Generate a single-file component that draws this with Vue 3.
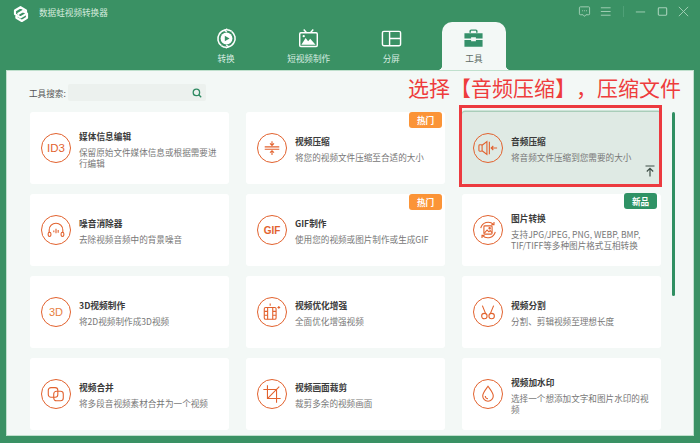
<template>
  <div class="app">
    <header class="header">
      <div class="title-row">
        <svg class="logo" viewBox="0 0 18 18" fill="none" stroke="#fff" stroke-width="2.2" stroke-linejoin="round">
          <path d="M3 5.5 8.5 2.2 14 5.5v3.6L8.5 12.4 3 9.1z" />
          <path d="M5.6 9.2 11 6l4 2.600v4.200L9.800 16 4.400 12.800v-2" />
        </svg>
        <span class="app-name">数据蛙视频转换器</span>
        <div class="win-btns">
          <svg class="win-icon" viewBox="0 0 14 14" fill="none" stroke="#a5d0b8" stroke-width="1">
            <path d="M2.500 2h9a1 1 0 0 1 1 1v6.500a1 1 0 0 1-1 1H8.500L7 12.300 5.500 10.500h-3a1 1 0 0 1-1-1V3a1 1 0 0 1 1-1z" />
            <path d="M4.500 6.200h1M6.600 6.200h1M8.700 6.200h1" />
          </svg>
          <svg class="win-icon menu" viewBox="0 0 14 14" fill="none" stroke="#a5d0b8" stroke-width="1">
            <path d="M2 3h10.500M2 7h10.500M2 11h10.500" />
          </svg>
          <span class="win-sep"></span>
          <svg class="win-icon min" viewBox="0 0 14 14" fill="none" stroke="#a5d0b8" stroke-width="1">
            <path d="M2 7.500h10" />
          </svg>
          <svg class="win-icon max" viewBox="0 0 14 14" fill="none" stroke="#a5d0b8" stroke-width="1.200">
            <rect x="2.500" y="3" width="9" height="8" rx="1" />
          </svg>
          <svg class="win-icon close" viewBox="0 0 14 14" fill="none" stroke="#a5d0b8" stroke-width="1">
            <path d="M2 2l10 10M12 2 2 12" />
          </svg>
        </div>
      </div>
      <nav class="tabs">
        <div v-for="tab in tabs" :key="tab.name" class="tab" :class="{ active: tab.active }">
          <svg v-if="tab.icon === 'convert'" class="tab-icon" viewBox="0 0 22 22" fill="none" stroke="#fff" stroke-width="1.600">
            <path d="M16.500 3.600A9 9 0 0 0 3.200 6.600 9 9 0 0 0 5.500 18.300" />
            <path d="M5.500 18.400A9 9 0 0 0 18.800 15.400 9 9 0 0 0 16.500 3.700" />
            <path d="M11.800 .8 8.800 2.600l2.600 1.600M10.200 21.200l3-1.800-2.600-1.600" stroke-width="1.200" />
            <circle cx="11" cy="11" r="6.200" fill="#fff" stroke="none" />
            <path d="M9.200 8v6l5-3z" fill="#3a9164" stroke="none" />
          </svg>
          <svg v-else-if="tab.icon === 'tv'" class="tab-icon" viewBox="0 0 22 22" fill="none" stroke="#fff" stroke-width="1.500">
            <rect x="1.800" y="5" width="18.400" height="14.400" rx="1.200" />
            <path d="M6 1.600 9 5M16 1.600 13 5" />
            <path d="M3.500 17.600 8 10.500l2.600 3.400 2.200-2.600 5.600 6.300z" fill="#fff" stroke="none" />
            <circle cx="6" cy="8.600" r="1.200" fill="#fff" stroke="none" />
          </svg>
          <svg v-else-if="tab.icon === 'split'" class="tab-icon" viewBox="0 0 22 22" fill="none" stroke="#fff" stroke-width="1.500">
            <rect x="1.500" y="3.500" width="19" height="15" rx="1.500" />
            <path d="M9 3.500v15M9 11h11.500" />
          </svg>
          <svg v-else class="tab-icon" viewBox="0 0 22 22">
            <path d="M7.500 5V3.200a1 1 0 0 1 1-1h5a1 1 0 0 1 1 1V5" fill="none" stroke="#35906a" stroke-width="1.500" />
            <path d="M1.500 5.500h19V11h-7V9.600h-5V11h-7z" fill="#35906a" />
            <path d="M1.500 12.600h7V14h5v-1.400h7v7h-19z" fill="#35906a" />
          </svg>
          <span class="tab-label">{{ tab.name }}</span>
        </div>
      </nav>
    </header>

    <main class="panel">
      <div class="search-row">
        <span class="search-label">工具搜索:</span>
        <div class="search-box">
          <svg class="search-icon" viewBox="0 0 10 10" fill="none" stroke="#2f8a62" stroke-width="1.300">
            <circle cx="4.400" cy="4.400" r="3.200" />
            <path d="M6.800 6.800 9.200 9.200" />
          </svg>
        </div>
      </div>
      <div class="body">
        <div class="grid">
          <div v-for="tool in tools" :key="tool.title" class="card" :class="{ selected: tool.selected }">
            <div class="icon">
              <span v-if="tool.mark" class="mark" :class="tool.icon">{{ tool.mark }}</span>
              <svg v-else-if="tool.icon === 'noise'" viewBox="0 0 22 22">
                <path d="M3.500 14v-3a7.500 7.500 0 0 1 15 0v3M11 9.500v5M8.600 11.500v2M13.400 11v3" />
                <rect x="2.400" y="13.500" width="3" height="4.600" rx="1.500" />
                <rect x="16.600" y="13.500" width="3" height="4.600" rx="1.500" />
              </svg>
              <svg v-else-if="tool.icon === 'compress'" viewBox="0 0 22 22">
                <path d="M3 9.800h16M3 12.400h16M11 3.500v4.500M8.800 6 11 8.200 13.200 6M11 18.600v-4.400M8.800 16.200 11 14l2.200 2.200" />
              </svg>
              <svg v-else-if="tool.icon === 'audio'" viewBox="0 0 22 22">
                <rect x="1" y="7.500" width="3.500" height="7" rx="1" />
                <path d="M4.500 8 9.800 4v14l-5.300-4M12.500 4v14M21 11h-6.500M16.800 8.800 14.500 11l2.300 2.200" />
              </svg>
              <svg v-else-if="tool.icon === 'image'" viewBox="0 0 22 22">
                <path d="M3 9a8.400 8.400 0 0 1 14-4.200M19 13a8.400 8.400 0 0 1-14 4.200M17.600 2.200v3h-3M4.400 19.800v-3h3" />
                <rect x="6.500" y="6.500" width="9" height="9" rx="1" />
                <path d="M7 14.500 10 11l2 2 1.400-1.300 2 2.200" />
                <circle cx="12.800" cy="9" r=".8" />
              </svg>
              <svg v-else-if="tool.icon === 'enhance'" viewBox="0 0 22 22">
                <rect x="2.500" y="6" width="13" height="13" rx="1.500" />
                <path d="M6.200 6v13M11.800 6v13M2.500 10.300h3.700M2.500 14.600h3.700M11.800 10.300h3.700M11.800 14.600h3.700M9 1.600v2.600M18.500 4.500v3M17 6h3" />
              </svg>
              <svg v-else-if="tool.icon === 'crop'" viewBox="0 0 22 22">
                <path d="M6 1.500V16h14.500M1.500 6H16v14.500M6 16 19 3" />
              </svg>
              <svg v-else-if="tool.icon === 'split'" viewBox="0 0 22 22">
                <circle cx="7" cy="15.500" r="3" />
                <circle cx="15" cy="15.500" r="3" />
                <path d="M8.400 12.800 4.800 4M13.600 12.800 17.200 4" />
              </svg>
              <svg v-else-if="tool.icon === 'merge'" viewBox="0 0 22 22">
                <rect x="2.500" y="4" width="10.500" height="10.500" rx="3" />
                <rect x="8.500" y="8" width="10.500" height="10.500" rx="3" />
              </svg>
              <svg v-else-if="tool.icon === 'drop'" viewBox="0 0 22 22">
                <path d="M11 2.500c3 4 5.800 7.200 5.800 10.600a5.800 5.800 0 0 1-11.600 0C5.200 9.700 8 6.500 11 2.500z" />
                <path d="M11 16.200a3 3 0 0 1-3-3" />
              </svg>
            </div>
            <div class="text">
              <div class="name">{{ tool.title }}</div>
              <div class="desc">{{ tool.desc }}</div>
            </div>
            <span v-if="tool.badge" class="badge" :class="tool.badgeType">{{ tool.badge }}</span>
            <template v-if="tool.selected">
              <svg class="pin" viewBox="0 0 10 12" fill="none" stroke="#3f4f47" stroke-width="1.200">
                <path d="M.5 1h9M5 11.500V3.500M1.800 6.500 5 3.300l3.200 3.200" />
              </svg>
              <div class="red-box"></div>
            </template>
          </div>
        </div>
        <div class="scrollbar"></div>
      </div>
      <div class="note">选择【音频压缩】，压缩文件</div>
    </main>
  </div>
</template>

<script setup>
const tabs = [
  { name: '转换', icon: 'convert' },
  { name: '短视频制作', icon: 'tv' },
  { name: '分屏', icon: 'split' },
  { name: '工具', icon: 'tools', active: true }
]

const tools = [
  { title: '媒体信息编辑', desc: '保留原始文件媒体信息或根据需要进行编辑', icon: 'id3', mark: 'ID3' },
  { title: '视频压缩', desc: '将您的视频文件压缩至合适的大小', icon: 'compress', badge: '热门', badgeType: 'hot' },
  { title: '音频压缩', desc: '将音频文件压缩到您需要的大小', icon: 'audio', selected: true },
  { title: '噪音消除器', desc: '去除视频音频中的背景噪音', icon: 'noise' },
  { title: 'GIF制作', desc: '使用您的视频或图片制作或生成GIF', icon: 'gif', mark: 'GIF', badge: '热门', badgeType: 'hot' },
  { title: '图片转换', desc: '支持JPG/JPEG, PNG, WEBP, BMP, TIF/TIFF等多种图片格式互相转换', icon: 'image', badge: '新品', badgeType: 'new' },
  { title: '3D视频制作', desc: '将2D视频制作成3D视频', icon: 'td', mark: '3D' },
  { title: '视频优化增强', desc: '全面优化增强视频', icon: 'enhance' },
  { title: '视频分割', desc: '分割、剪辑视频至理想长度', icon: 'split' },
  { title: '视频合并', desc: '将多段音视频素材合并为一个视频', icon: 'merge' },
  { title: '视频画面裁剪', desc: '裁剪多余的视频画面', icon: 'crop' },
  { title: '视频加水印', desc: '选择一个想添加文字和图片水印的视频', icon: 'drop' }
]
</script>

<style>
body {
  margin: 0;
}
</style>

<style scoped>
.app {
  width: 700px;
  height: 443px;
  display: flex;
  flex-direction: column;
  background: #3a9164;
  font-family: "Noto Sans CJK SC", "Liberation Sans", sans-serif;
  overflow: hidden;
}

.title-row {
  height: 22px;
  display: flex;
  align-items: center;
  padding: 2px 10px 0 12px;
  box-sizing: border-box;
}

.logo {
  width: 18px;
  height: 18px;
  margin-top: 4px;
}

.app-name {
  margin-left: 9px;
  font-size: 8.6px;
  color: #d6ebdf;
}

.win-btns {
  margin-left: auto;
  margin-top: -2px;
  display: flex;
  align-items: center;
  gap: 8.5px;
}

.win-icon {
  width: 13px;
  height: 13px;
}

.win-sep {
  width: 1px;
  height: 11px;
  margin: 0 2px;
  background: #4fa077;
}

.tabs {
  height: 48px;
  display: flex;
  gap: 18.67px;
  margin-left: 194px;
}

.tab {
  position: relative;
  width: 64px;
  display: flex;
  flex-direction: column;
  align-items: center;
  padding-top: 6px;
  box-sizing: border-box;
  color: #d9ede2;
  font-size: 8.6px;
}

.tab.active {
  background: #f3f8f6;
  border-radius: 10px 10px 0 0;
  color: #5d6b64;
}

.tab.active::before,
.tab.active::after {
  content: "";
  position: absolute;
  bottom: 0;
  width: 5px;
  height: 5px;
}

.tab.active::before {
  left: -5px;
  background: radial-gradient(circle at 0 0, transparent 5px, #f3f8f6 5.5px);
}

.tab.active::after {
  right: -5px;
  background: radial-gradient(circle at 100% 0, transparent 5px, #f3f8f6 5.5px);
}

.tab-icon {
  width: 21px;
  height: 21px;
}

.tab-label {
  margin-top: 3px;
  line-height: 13px;
}

.panel {
  position: relative;
  flex: 1;
  margin: 0 6px 7px;
  padding: 14px 0 0 24px;
  background: #f3f8f6;
  box-shadow: inset 0 0 0 1px #bfe0cd;
}

.search-row {
  height: 17px;
  margin-bottom: 11px;
  display: flex;
  align-items: center;
  gap: 2px;
}

.search-label {
  width: 37px;
  margin-left: -1px;
  font-size: 8.6px;
  color: #555;
  white-space: nowrap;
}

.search-box {
  width: 138px;
  height: 17px;
  display: flex;
  align-items: center;
  justify-content: flex-end;
  padding-right: 4px;
  box-sizing: border-box;
  background: #ecf1ee;
  border-radius: 2px;
}

.search-icon {
  width: 10px;
  height: 10px;
}

.body {
  display: flex;
  align-items: flex-start;
}

.grid {
  width: 631px;
  display: grid;
  grid-template-columns: repeat(3, 199px);
  grid-auto-rows: 72px;
  gap: 10px 17px;
}

.card {
  position: relative;
  display: flex;
  align-items: center;
  gap: 8px;
  padding: 0 10px 0 11px;
  background: #fff;
  border-radius: 3px;
}

.card.selected {
  background: #dfeae4;
  box-shadow: 0 -1.5px 0 #a9cdb9;
}

.icon {
  flex: none;
  width: 30px;
  height: 30px;
  display: flex;
  align-items: center;
  justify-content: center;
  border: 1px solid #e2622e;
  border-radius: 50%;
  box-sizing: border-box;
}

.icon svg {
  width: 20px;
  height: 20px;
  fill: none;
  stroke: #e2622e;
  stroke-width: 1.2;
}

.mark {
  font-size: 11.5px;
  font-weight: 500;
  color: #e2622e;
  font-family: "Liberation Sans", sans-serif;
}

.mark.gif {
  font-size: 10px;
  font-weight: 700;
}

.mark.td {
  font-size: 11px;
  font-weight: 400;
  color: #e8803f;
}

.text {
  flex: 1;
  min-width: 0;
  padding-top: 3px;
}

.name {
  font-size: 8.7px;
  font-weight: 700;
  line-height: 12px;
  color: #3a3a3a;
  margin-bottom: 4px;
}

.desc {
  font-size: 8.6px;
  line-height: 11px;
  color: #777;
  overflow-wrap: anywhere;
}

.badge {
  position: absolute;
  top: 0;
  width: 33px;
  height: 16px;
  display: flex;
  align-items: center;
  justify-content: center;
  font-size: 8.6px;
  font-weight: 700;
  color: #fff;
  border-radius: 3px;
}

.badge.hot {
  right: 3px;
  background: #fb9437;
}

.badge.new {
  top: -1px;
  right: 4px;
  background: #2f9265;
}

.pin {
  position: absolute;
  right: 6px;
  bottom: 7px;
  width: 10px;
  height: 12px;
}

.red-box {
  position: absolute;
  inset: -7px -1px -3px -3px;
  border: 3px solid #ec3a3f;
  pointer-events: none;
}

.scrollbar {
  flex: none;
  width: 3px;
  height: 184px;
  margin-left: 11px;
  border-radius: 1.5px;
  background: #2f8f62;
}

.note {
  position: absolute;
  left: 402px;
  top: 3px;
  font-size: 21px;
  line-height: 28px;
  color: #ee3c3c;
  white-space: nowrap;
  text-spacing-trim: space-all;
}
</style>
